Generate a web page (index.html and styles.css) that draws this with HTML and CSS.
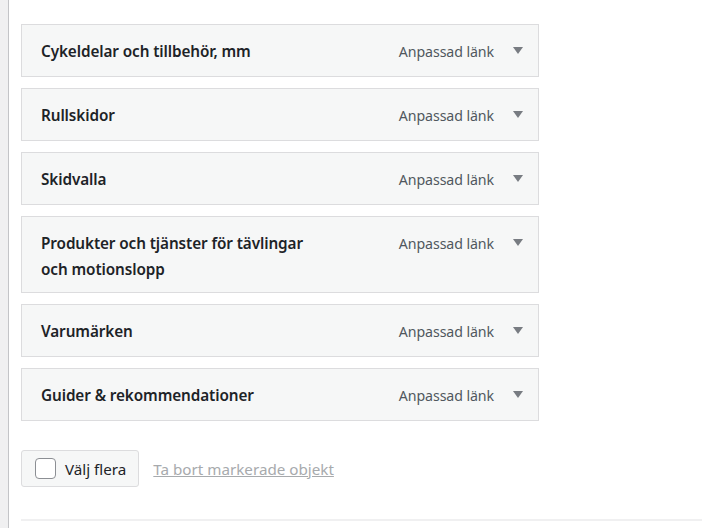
FILE: index.html
```html
<!DOCTYPE html>
<html lang="sv">
<head>
<meta charset="utf-8">
<title>Meny</title>
<link rel="stylesheet" href="styles.css">
</head>
<body>
<div class="page">
  <div class="sidebar"></div>
  <main class="main">
    <ul class="menu">
      <li class="item"><span class="title">Cykeldelar och tillbehör, mm</span><span class="controls"><span class="type">Anpassad länk</span><span class="arrow"></span></span></li>
      <li class="item"><span class="title">Rullskidor</span><span class="controls"><span class="type">Anpassad länk</span><span class="arrow"></span></span></li>
      <li class="item"><span class="title">Skidvalla</span><span class="controls"><span class="type">Anpassad länk</span><span class="arrow"></span></span></li>
      <li class="item"><span class="title">Produkter och tjänster för tävlingar och motionslopp</span><span class="controls"><span class="type">Anpassad länk</span><span class="arrow"></span></span></li>
      <li class="item"><span class="title">Varumärken</span><span class="controls"><span class="type">Anpassad länk</span><span class="arrow"></span></span></li>
      <li class="item"><span class="title">Guider &amp; rekommendationer</span><span class="controls"><span class="type">Anpassad länk</span><span class="arrow"></span></span></li>
    </ul>
    <div class="bulk">
      <label class="bulk-toggle"><span class="checkbox"></span><span>Välj flera</span></label>
      <a class="remove" href="#">Ta bort markerade objekt</a>
    </div>
    <div class="divider"></div>
  </main>
</div>
</body>
</html>
```
FILE: styles.css
```css
* { box-sizing: border-box; }
html, body { margin: 0; padding: 0; background: #fff; }
body {
  font-family: "Noto Sans", "Open Sans", sans-serif;
  color: #1d2327;
  width: 702px;
  height: 528px;
  overflow: hidden;
}
.page { display: flex; height: 528px; }
.sidebar {
  width: 9px;
  flex: none;
  background: #f0f0f1;
  border-right: 1px solid #c3c4c7;
}
.main {
  flex: 1;
  padding: 24px 0 0 12px;
}
.menu {
  list-style: none;
  margin: 0;
  padding: 0;
  width: 518px;
  display: flex;
  flex-direction: column;
  gap: 11px;
}
.item {
  display: flex;
  align-items: flex-start;
  background: #f6f7f7;
  border: 1px solid #dcdcde;
  padding: 11px 15px 10px 19px;
}
.title {
  flex: none;
  width: 275px;
  min-height: 30px;
  padding: 2px 0 0;
  font-size: 15.3px;
  font-weight: 600;
  line-height: 26px;
  color: #1d2327;
  letter-spacing: -0.1px;
}
.controls {
  margin-left: auto;
  display: flex;
  align-items: center;
  height: 30px;
}
.type {
  font-size: 14.2px;
  color: #50575e;
  letter-spacing: -0.1px;
}
.arrow {
  margin-left: 19px;
  width: 0;
  height: 0;
  border-left: 5px solid transparent;
  border-right: 5px solid transparent;
  border-top: 7px solid #787c82;
  margin-top: -2px;
}
.bulk {
  margin-top: 29px;
  display: flex;
  align-items: center;
  gap: 14px;
}
.bulk-toggle {
  display: flex;
  align-items: center;
  gap: 9px;
  height: 37px;
  padding: 0 12px 0 13px;
  background: #f6f7f7;
  border: 1px solid #dcdcde;
  border-radius: 3px;
  font-size: 15.2px;
  color: #1d2327;
}
.checkbox {
  width: 21px;
  height: 21px;
  border: 1px solid #8c8f94;
  border-radius: 4px;
  background: #fff;
}
.remove {
  font-size: 15.2px;
  color: #a7aaad;
  text-decoration: underline;
}
.divider {
  margin-top: 32px;
  height: 2px;
  background: #f0f0f1;
}
```
